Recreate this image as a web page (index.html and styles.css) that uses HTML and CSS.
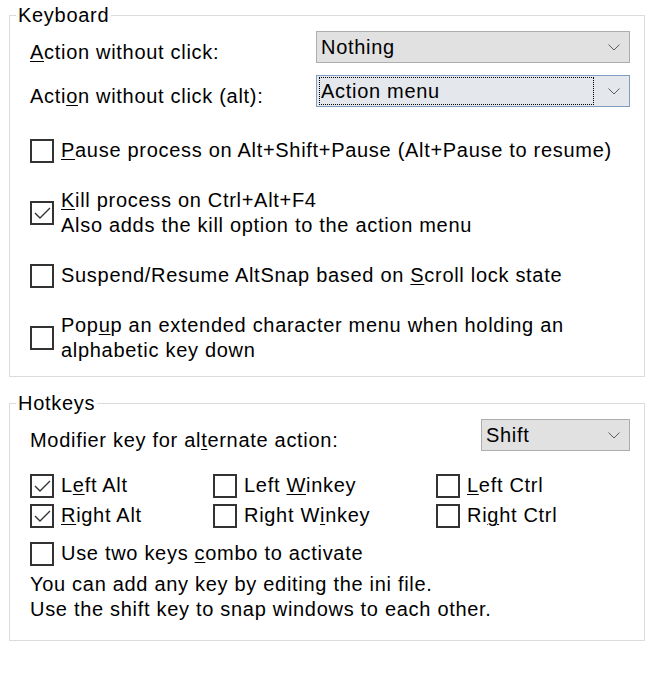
FILE: index.html
```html
<!DOCTYPE html>
<html>
<head>
<meta charset="utf-8">
<link rel="stylesheet" href="styles.css">
</head>
<body>
<fieldset class="group group-keyboard">
  <legend class="group-title">Keyboard</legend>
  <div class="group-body kb-body">
    <div class="combo-grid">
      <div class="field-label"><u>A</u>ction without click:</div>
      <div class="combo">
        <span class="combo-value">Nothing</span>
        <svg class="chevron" width="12" height="7" viewBox="0 0 12 7"><polyline points="0.5,0.5 6,6 11.5,0.5" fill="none" stroke="#5c5c5c" stroke-width="1"/></svg>
      </div>
      <div class="field-label">Acti<u>o</u>n without click (alt):</div>
      <div class="combo combo-focus">
        <span class="combo-value focus-rect">Action menu</span>
        <svg class="chevron" width="12" height="7" viewBox="0 0 12 7"><polyline points="0.5,0.5 6,6 11.5,0.5" fill="none" stroke="#5c5c5c" stroke-width="1"/></svg>
      </div>
    </div>
    <div class="check-list">
      <div class="check">
        <span class="box"></span>
        <span class="check-text"><u>P</u>ause process on Alt+Shift+Pause (Alt+Pause to resume)</span>
      </div>
      <div class="check">
        <span class="box"><svg width="20" height="20" viewBox="0 0 20 20"><polyline points="3,10 8,15 18,5" fill="none" stroke="#333" stroke-width="1.4"/></svg></span>
        <span class="check-text"><u>K</u>ill process on Ctrl+Alt+F4<br>Also adds the kill option to the action menu</span>
      </div>
      <div class="check">
        <span class="box"></span>
        <span class="check-text">Suspend/Resume AltSnap based on <u>S</u>croll lock state</span>
      </div>
      <div class="check">
        <span class="box"></span>
        <span class="check-text">Pop<u>u</u>p an extended character menu when holding an<br>alphabetic key down</span>
      </div>
    </div>
  </div>
</fieldset>

<fieldset class="group group-hotkeys">
  <legend class="group-title">Hotkeys</legend>
  <div class="group-body hk-body">
    <div class="combo-grid combo-grid-small">
      <div class="field-label">Modifier key for al<u>t</u>ernate action:</div>
      <div class="combo">
        <span class="combo-value">Shift</span>
        <svg class="chevron" width="12" height="7" viewBox="0 0 12 7"><polyline points="0.5,0.5 6,6 11.5,0.5" fill="none" stroke="#5c5c5c" stroke-width="1"/></svg>
      </div>
    </div>
    <div class="key-grid">
      <div class="check">
        <span class="box"><svg width="20" height="20" viewBox="0 0 20 20"><polyline points="3,10 8,15 18,5" fill="none" stroke="#333" stroke-width="1.4"/></svg></span>
        <span class="check-text">L<u>e</u>ft Alt</span>
      </div>
      <div class="check">
        <span class="box"></span>
        <span class="check-text">Left <u>W</u>inkey</span>
      </div>
      <div class="check">
        <span class="box"></span>
        <span class="check-text"><u>L</u>eft Ctrl</span>
      </div>
      <div class="check">
        <span class="box"><svg width="20" height="20" viewBox="0 0 20 20"><polyline points="3,10 8,15 18,5" fill="none" stroke="#333" stroke-width="1.4"/></svg></span>
        <span class="check-text"><u>R</u>ight Alt</span>
      </div>
      <div class="check">
        <span class="box"></span>
        <span class="check-text">Right W<u>i</u>nkey</span>
      </div>
      <div class="check">
        <span class="box"></span>
        <span class="check-text">Ri<u>g</u>ht Ctrl</span>
      </div>
    </div>
    <div class="check combo-check">
      <span class="box"></span>
      <span class="check-text">Use two keys <u>c</u>ombo to activate</span>
    </div>
    <p class="note">You can add any key by editing the ini file.<br>Use the shift key to snap windows to each other.</p>
  </div>
</fieldset>
</body>
</html>
```

FILE: styles.css
```css
html, body {
  margin: 0;
  padding: 0;
  background: #ffffff;
}

body {
  font-family: "Liberation Sans", Arial, sans-serif;
  font-size: 20px;
  line-height: 25px;
  letter-spacing: 0.7px;
  color: #000000;
  width: 660px;
  height: 688px;
  overflow: hidden;
}

u {
  text-decoration: underline;
  text-decoration-thickness: 1px;
  text-underline-offset: 2px;
}

.group {
  box-sizing: border-box;
  width: 636px;
  margin: 0 0 0 9px;
  padding: 0;
  border: 1px solid #dcdcdc;
  min-width: 0;
}

.group-keyboard {
  margin-top: 3px;
}

.group-hotkeys {
  margin-top: 14px;
}

.group-title {
  margin-left: 6px;
  padding: 0 2px;
  line-height: 25px;
  height: 25px;
}

.group-body {
  padding: 3px 14px 13px 20px;
}

.hk-body {
  padding-bottom: 18px;
}

.combo-grid {
  display: grid;
  grid-template-columns: 1fr 314px;
  grid-auto-rows: 32px;
  row-gap: 12px;
  align-items: start;
}

.combo-grid-small {
  grid-template-columns: 1fr 149px;
}

.field-label {
  padding-top: 9px;
  height: 32px;
  box-sizing: border-box;
  white-space: nowrap;
  overflow: visible;
}

.combo {
  box-sizing: border-box;
  height: 32px;
  border: 1px solid #adadad;
  background: #e1e1e1;
  display: flex;
  align-items: center;
}

.combo-focus {
  border-color: #7f9dbd;
  background: #e4e8ec;
}

.combo-value {
  box-sizing: border-box;
  height: 28px;
  line-height: 26px;
  margin-left: 2px;
  padding-left: 1px;
  border: 1px dotted transparent;
  flex: 1;
  white-space: nowrap;
}

.focus-rect {
  border-color: #000000;
  flex: 0 0 275px;
}

.chevron {
  margin-left: auto;
  margin-right: 9px;
  flex: none;
}

.check-list {
  margin-top: 31px;
  display: flex;
  flex-direction: column;
  gap: 25px;
}

.check {
  display: flex;
  align-items: center;
  gap: 7px;
}

.box {
  box-sizing: border-box;
  width: 24px;
  height: 24px;
  border: 2px solid #333333;
  background: #ffffff;
  flex: none;
  display: block;
}

.box svg {
  display: block;
}

.check-text {
  white-space: nowrap;
}

.key-grid {
  margin-top: 22px;
  display: grid;
  grid-template-columns: 183px 223px auto;
  row-gap: 5px;
}

.combo-check {
  margin-top: 13px;
}

.note {
  margin: 6px 0 0 0;
  white-space: nowrap;
}
```
